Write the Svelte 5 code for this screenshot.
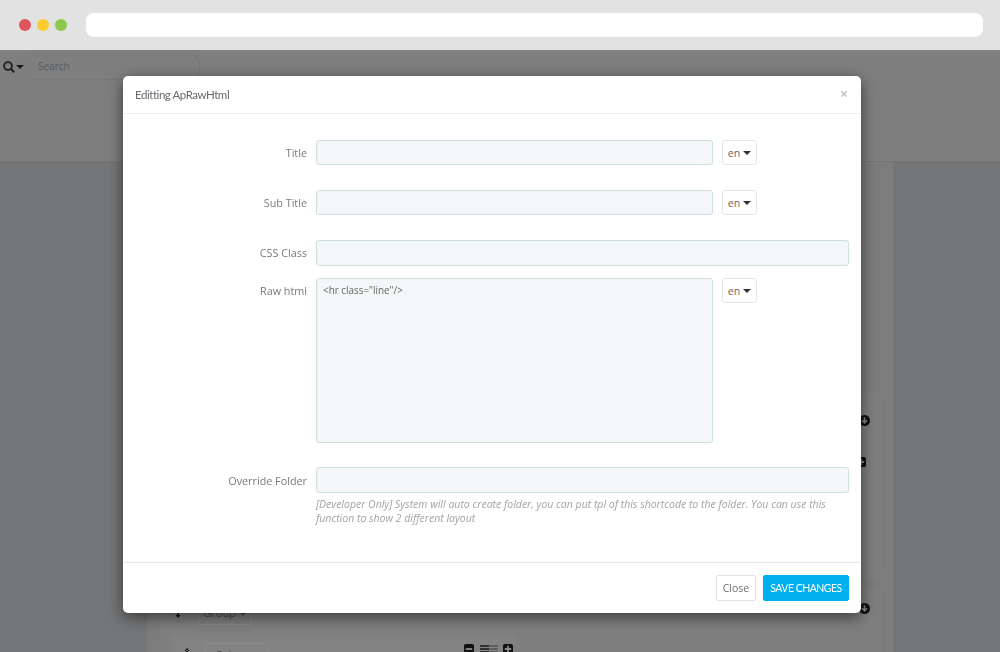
<script lang="ts">
  let title = $state('');
  let subTitle = $state('');
  let cssClass = $state('');
  let rawHtml = $state('<hr class="line"/>');
  let overrideFolder = $state('');
</script>

{#snippet caret()}
  <svg class="caret" width="8" height="4" viewBox="0 0 8 4"><path d="M0 0h8L4 4z" fill="currentColor" /></svg>
{/snippet}

{#snippet circleDown()}
  <svg class="sq" width="11" height="11" viewBox="0 0 12 12">
    <circle cx="6" cy="6" r="6" fill="#111" />
    <path d="M6 2.5v6M3.4 5.8 6 8.6l2.6-2.8" fill="none" stroke="#8a8a8a" stroke-width="1.7" />
  </svg>
{/snippet}

{#snippet minusBox()}
  <svg class="sq" width="10" height="10" viewBox="0 0 11 11">
    <rect width="11" height="11" rx="2" fill="#111" />
    <path d="M2 5.5h7" stroke="#8a8a8a" stroke-width="2" />
  </svg>
{/snippet}

{#snippet plusBox()}
  <svg class="sq" width="10" height="10" viewBox="0 0 11 11">
    <rect width="11" height="11" rx="2" fill="#111" />
    <path d="M2 5.5h7M5.5 2v7" stroke="#8a8a8a" stroke-width="2" />
  </svg>
{/snippet}

{#snippet moveIcon()}
  <svg class="sq" width="8" height="14" viewBox="0 0 8 14">
    <path d="M4 0 1.5 3h5zM4 14 1.5 11h5zM3.2 2h1.6v10H3.2z" fill="#111" />
  </svg>
{/snippet}

<div class="chrome">
  <span class="dot red"></span>
  <span class="dot yellow"></span>
  <span class="dot green"></span>
  <div class="address"></div>
</div>

<div class="page">
  <div class="topbar">
    <div class="search">
      <svg width="12" height="12" viewBox="0 0 12 12">
        <circle cx="5" cy="5" r="3.9" fill="none" stroke="#1c1c1c" stroke-width="1.8" />
        <path d="M8 8l3.2 3.2" stroke="#1c1c1c" stroke-width="2" />
      </svg>
      <span class="search-caret">{@render caret()}</span>
      <div class="search-box">Search</div>
    </div>
  </div>

  <div class="content">
    <div class="panel">
      <section class="group first">
        <div class="group-head">{@render circleDown()}</div>
        <div class="nested">{@render plusBox()}</div>
      </section>
      <section class="group second">
        <div class="group-head">
          {@render moveIcon()}
          <span class="ghost">Group {@render caret()}</span>
          <span class="fill"></span>
          {@render circleDown()}
        </div>
        <div class="column">
          {@render moveIcon()}
          <span class="ghost wide">Column</span>
          <span class="fill"></span>
          {@render minusBox()}
          <span class="bars"><i></i><i></i></span>
          {@render plusBox()}
        </div>
      </section>
    </div>
  </div>
</div>

<div class="modal">
  <header>
    <h4>Editting ApRawHtml</h4>
    <span class="close">×</span>
  </header>

  <div class="modal-body">
    <div class="row r-title">
      <label for="f-title">Title</label>
      <div class="with-lang">
        <input id="f-title" bind:value={title} />
        <button class="lang">en {@render caret()}</button>
      </div>
    </div>
    <div class="row r-sub">
      <label for="f-sub">Sub Title</label>
      <div class="with-lang">
        <input id="f-sub" bind:value={subTitle} />
        <button class="lang">en {@render caret()}</button>
      </div>
    </div>
    <div class="row r-css">
      <label for="f-css">CSS Class</label>
      <input id="f-css" class="tall" bind:value={cssClass} />
    </div>
    <div class="row r-raw">
      <label for="f-raw">Raw html</label>
      <div class="with-lang">
        <textarea id="f-raw" bind:value={rawHtml}></textarea>
        <button class="lang">en {@render caret()}</button>
      </div>
    </div>
    <div class="row r-folder">
      <label for="f-folder">Override Folder</label>
      <div>
        <input id="f-folder" class="tall" bind:value={overrideFolder} />
        <p class="help">[Developer Only] System will auto create folder, you can put tpl of this shortcode to the folder. You can use this function to show 2 different layout</p>
      </div>
    </div>
  </div>

  <footer>
    <button class="btn-close">Close</button>
    <button class="btn-save">SAVE CHANGES</button>
  </footer>
</div>

<style>
  :global(body) {
    margin: 0;
    font-family: 'Open Sans', 'Noto Sans', sans-serif;
    background: #757677;
    overflow: hidden;
  }

  .chrome {
    height: 50px;
    background: #e2e2e2;
    display: flex;
    align-items: center;
    padding-left: 19px;
    box-sizing: border-box;
  }

  .dot {
    width: 12px;
    height: 12px;
    border-radius: 50%;
    margin-right: 6px;
  }
  .red { background: #e0555b; }
  .yellow { background: #fdcb2f; }
  .green { background: #8cc84b; }

  .address {
    margin-left: 13px;
    width: 897px;
    height: 24px;
    background: #fff;
    border-radius: 8px;
  }

  .page {
    height: 602px;
    overflow: hidden;
  }

  .topbar {
    height: 112px;
    background: #7f7f7f;
    border-bottom: 1px solid #757575;
    box-sizing: border-box;
    padding: 4px 0 0 3px;
  }

  .search {
    display: flex;
    align-items: center;
    color: #1c1c1c;
  }

  .search-caret {
    display: flex;
    margin-left: 1px;
  }

  .search-box {
    margin-left: 6px;
    width: 161px;
    height: 24px;
    padding-left: 7px;
    border: 1px solid #787878;
    border-left-color: transparent;
    border-radius: 0 10px 10px 0;
    font-size: 10px;
    line-height: 22px;
    color: #5a5a5a;
  }

  .content {
    padding-left: 147px;
  }

  .panel {
    width: 748px;
    height: 490px;
    box-sizing: border-box;
    background: #7c7c7c;
    border-right: 1px solid #6f6f6f;
    padding: 230px 13px 0;
  }

  .group {
    background: #7f7f7f;
    border-radius: 4px;
    box-sizing: border-box;
  }

  .group.first {
    height: 187px;
    padding: 23px 11px 0 0;
    margin-bottom: 8px;
  }

  .group.second {
    height: 100px;
    padding: 16px 11px 0 13px;
  }

  .group-head {
    display: flex;
    justify-content: flex-end;
    align-items: center;
    height: 11px;
  }

  .nested {
    margin-top: 31px;
    margin-right: 4px;
    height: 120px;
    display: flex;
    justify-content: flex-end;
    align-items: flex-start;
  }

  .second .group-head {
    height: 22px;
    align-items: flex-start;
    gap: 16px;
    padding-left: 1px;
  }

  .second .group-head > .sq:first-child { margin-top: 1px; }

  .fill { flex: 1; }

  .ghost {
    display: inline-block;
    width: 54px;
    height: 22px;
    border: 1px solid #8a8a8a;
    border-radius: 2px;
    font-size: 11px;
    line-height: 18px;
    text-align: center;
    color: #4a4a4a;
    box-sizing: border-box;
    flex: none;
  }

  .ghost.wide {
    width: 63px;
    height: 30px;
    line-height: 22px;
    text-align: left;
    padding-left: 9px;
  }

  .column {
    margin: 9px 355px 0 -1px;
    padding: 9px 2px 0 11px;
    display: flex;
    align-items: flex-start;
    gap: 5px;
    background: #828282;
    height: 40px;
    box-sizing: border-box;
    border-radius: 4px;
  }

  .column .sq { margin-top: 1px; }
  .column > .sq:first-child { margin-top: 5px; margin-right: 9px; }

  .bars {
    display: inline-flex;
    width: 18px;
    height: 8px;
    margin: 2px 0 0 1px;
  }
  .bars i {
    flex: 1;
    background: repeating-linear-gradient(#333 0 2px, transparent 2px 3px);
  }
  .bars i + i {
    background: repeating-linear-gradient(#5e5e5e 0 2px, transparent 2px 3px);
  }

  .modal {
    position: fixed;
    left: 123px;
    top: 76px;
    width: 738px;
    height: 537px;
    display: flex;
    flex-direction: column;
    background: #fff;
    border-radius: 5px;
    box-shadow: 0 4px 16px rgba(0, 0, 0, 0.55);
    color: #777a7c;
  }

  header {
    height: 38px;
    flex: none;
    box-sizing: border-box;
    display: flex;
    align-items: center;
    justify-content: space-between;
    padding: 0 12px 1px;
    border-bottom: 1px solid #eeeeee;
  }

  h4 {
    margin: 0;
    font: 400 11.5px 'Lato', sans-serif;
    letter-spacing: -0.45px;
    color: #666b70;
  }

  .close {
    font-size: 14px;
    line-height: 14px;
    color: #c6c6c6;
    font-weight: 700;
    margin-right: 1px;
  }

  .modal-body {
    flex: 1;
    padding: 26px 12px 0;
    box-sizing: border-box;
  }

  .row {
    display: grid;
    grid-template-columns: 173px 533px;
    column-gap: 8px;
  }

  .r-title, .r-sub { margin-bottom: 25px; }
  .r-css { margin-bottom: 12px; }
  .r-raw { margin-bottom: 24px; }

  label {
    text-align: right;
    font-size: 10.8px;
    line-height: 25px;
    padding-right: 1px;
    color: #777a7c;
  }

  .r-css label { line-height: 26px; }
  .r-folder label { line-height: 27px; }

  .with-lang {
    display: grid;
    grid-template-columns: 397px 35px;
    column-gap: 9px;
    align-items: start;
  }

  input, textarea {
    display: block;
    width: 100%;
    box-sizing: border-box;
    height: 25px;
    margin: 0;
    padding: 0 7px;
    background: #f4f7f8;
    border: 1px solid #cfdfe1;
    border-radius: 3px;
    font: 9.9px/1.4 'Open Sans', sans-serif;
    color: #666;
    outline: none;
  }

  input.tall { height: 26px; }

  textarea {
    height: 165px;
    padding: 5px 6px;
    resize: none;
  }

  .lang {
    height: 25px;
    padding: 0;
    background: #fff;
    border: 1px solid #e6e6e6;
    border-radius: 3px;
    font: 10.5px 'Open Sans', sans-serif;
    color: #666;
    display: flex;
    align-items: center;
    justify-content: center;
    gap: 3px;
  }

  .lang .caret { color: #333; }

  .caret {
    flex: none;
    vertical-align: middle;
  }

  .sq { flex: none; }

  .help {
    margin: 4px 0 0;
    font-size: 10.5px;
    line-height: 14px;
    font-style: italic;
    color: #a3a3a3;
  }

  footer {
    height: 51px;
    flex: none;
    box-sizing: border-box;
    border-top: 1px solid #e8e8e8;
    display: flex;
    justify-content: flex-end;
    align-items: flex-start;
    gap: 7px;
    padding: 12px 12px 0;
  }

  footer button {
    height: 26px;
    padding: 0;
    border-radius: 2px;
    font: 10.5px 'Open Sans', sans-serif;
  }

  .btn-close {
    width: 40px;
    background: #fff;
    border: 1px solid #e2e2e2;
    color: #6d6d6d;
  }

  footer .btn-save {
    width: 86px;
    padding-bottom: 1px;
    background: #00aff0;
    border: 1px solid #00aff0;
    color: #fff;
    font: 10.5px 'Lato', sans-serif;
    letter-spacing: -0.5px;
  }
</style>
